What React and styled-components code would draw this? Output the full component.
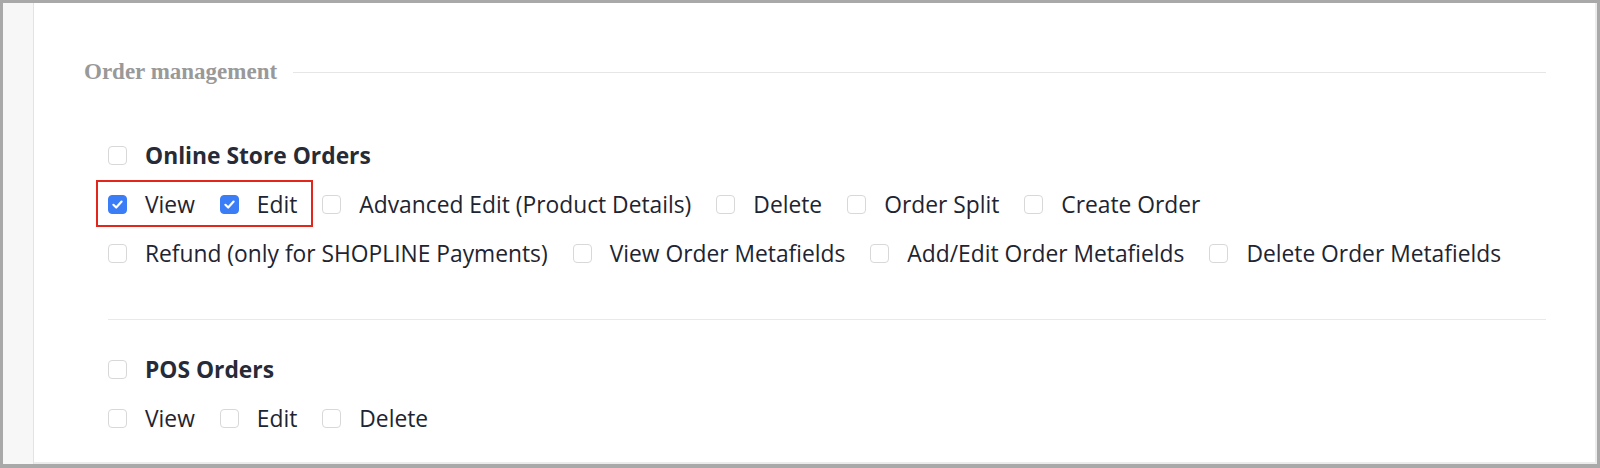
import React from "react";
import styled, { createGlobalStyle } from "styled-components";

const GlobalStyle = createGlobalStyle`
  html, body {
    margin: 0;
    padding: 0;
    background: #ffffff;
  }
  * {
    box-sizing: border-box;
  }
`;

const sections = [
  {
    title: "Online Store Orders",
    highlighted: [
      { label: "View", checked: true },
      { label: "Edit", checked: true },
    ],
    items: [
      "Advanced Edit (Product Details)",
      "Delete",
      "Order Split",
      "Create Order",
      "Refund (only for SHOPLINE Payments)",
      "View Order Metafields",
      "Add/Edit Order Metafields",
      "Delete Order Metafields",
    ],
  },
  {
    title: "POS Orders",
    highlighted: [],
    items: ["View", "Edit", "Delete"],
  },
];

const Frame = styled.div`
  display: flex;
  width: 1600px;
  height: 468px;
  border: 3px solid #a9a9a9;
  border-bottom-width: 4px;
  background: #ffffff;
`;

const Rail = styled.div`
  width: 31px;
  flex: none;
  background: #f7f7f7;
  border-right: 1px solid #e3e3e3;
`;

const Main = styled.main`
  flex: 1;
  padding: 54px 49px 0 50px;
  border-right: 2px solid #ececec;
  border-bottom: 2px solid #ececec;
`;

const GroupHeading = styled.div`
  display: flex;
  align-items: center;
  gap: 16px;
  height: 30px;
  font-family: "Liberation Serif", "Times New Roman", serif;
  font-weight: 700;
  font-size: 23px;
  color: #999999;
  white-space: nowrap;

  &::after {
    content: "";
    flex: 1;
    height: 1px;
    background: #e6e6e6;
  }
`;

const SectionList = styled.div`
  padding: 53px 0 0 24px;
  display: flex;
  flex-direction: column;
`;

const Section = styled.section`
  display: flex;
  flex-direction: column;
  gap: 19px;
`;

const Divider = styled.hr`
  margin: 51px 0 34px;
  border: none;
  height: 1px;
  background: #e9e9e9;
`;

const Options = styled.div`
  display: flex;
  flex-wrap: wrap;
  column-gap: 25px;
  row-gap: 19px;
`;

const Highlight = styled.div`
  position: relative;
  display: flex;
  gap: 25px;

  &::after {
    content: "";
    position: absolute;
    top: -9px;
    left: -12px;
    right: -16px;
    bottom: -8px;
    border: 2px solid #e3261c;
    pointer-events: none;
  }
`;

const Option = styled.label`
  display: flex;
  align-items: center;
  gap: 18px;
  height: 30px;
  font-family: "Open Sans", "Noto Sans", sans-serif;
  font-size: 22.8px;
  font-weight: ${(p) => (p.$title ? 700 : 400)};
  color: ${(p) => (p.$title ? "#262b37" : "#1e2431")};
  white-space: nowrap;
`;

const Box = styled.span`
  width: 19px;
  height: 19px;
  flex: none;
  display: flex;
  align-items: center;
  justify-content: center;
  border-radius: 4px;
  border: 1px solid ${(p) => (p.$checked ? "#3a7df7" : "#d8d8d8")};
  background: ${(p) => (p.$checked ? "#3a7df7" : "#ffffff")};
`;

const Checkbox = ({ checked }) => (
  <Box $checked={checked}>
    {checked && (
      <svg width="13" height="13" viewBox="0 0 13 13">
        <path
          d="M2.4 6.8 L5.2 9.5 L10.6 3.6"
          fill="none"
          stroke="#ffffff"
          strokeWidth="2.2"
          strokeLinecap="round"
          strokeLinejoin="round"
        />
      </svg>
    )}
  </Box>
);

const Permission = ({ label, checked, title }) => (
  <Option $title={title}>
    <Checkbox checked={checked} />
    {label}
  </Option>
);

export default function App() {
  return (
    <>
      <GlobalStyle />
      <Frame>
        <Rail />
        <Main>
          <GroupHeading>Order management</GroupHeading>
          <SectionList>
            {sections.map((s, i) => (
              <React.Fragment key={s.title}>
                {i > 0 && <Divider />}
                <Section>
                  <Permission label={s.title} title />
                  <Options>
                    {s.highlighted.length > 0 && (
                      <Highlight>
                        {s.highlighted.map((h) => (
                          <Permission key={h.label} label={h.label} checked={h.checked} />
                        ))}
                      </Highlight>
                    )}
                    {s.items.map((label) => (
                      <Permission key={label} label={label} />
                    ))}
                  </Options>
                </Section>
              </React.Fragment>
            ))}
          </SectionList>
        </Main>
      </Frame>
    </>
  );
}
